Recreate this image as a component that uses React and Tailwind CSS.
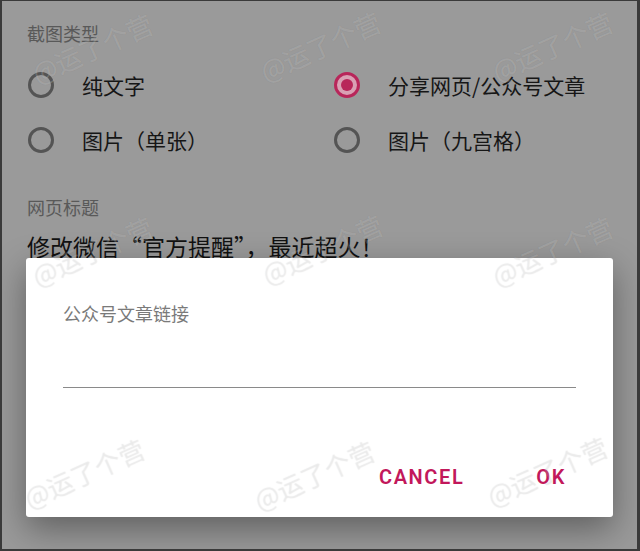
const cjk = "font-['Noto_Sans_CJK_SC','Noto_Sans',sans-serif]";

const Radio = ({ checked }) =>
  checked ? (
    <svg width="28" height="28" viewBox="0 0 28 28">
      <circle cx="14" cy="14" r="11.5" fill="#d9a0b4" stroke="#b8265a" strokeWidth="3" />
      <circle cx="14" cy="14" r="6" fill="#b8265a" />
    </svg>
  ) : (
    <svg width="28" height="28" viewBox="0 0 28 28">
      <circle cx="14" cy="14" r="11.5" fill="none" stroke="#545454" strokeWidth="3" />
    </svg>
  );

const Option = ({ label, checked }) => (
  <div className="flex items-center h-[28px]">
    <Radio checked={checked} />
    <span className="ml-[27px] text-[21px] text-[#161616] leading-[28px]">{label}</span>
  </div>
);

const marks = [
  [90, 47], [318, 45], [550, 45],
  [90, 250], [320, 248], [550, 250],
  [82, 472], [312, 474], [545, 470],
];

function App() {
  return (
    <div className={`relative w-[640px] h-[551px] overflow-hidden bg-[#9a9a9a] border-t border-l-2 border-r-[3px] border-b-2 border-[#3a3a3a] ${cjk}`}>
      {/* form behind the scrim */}
      <div className="pl-[25px] pt-[21px]">
        <div className="text-[18px] leading-[22px] text-[#595959]">截图类型</div>
        <div className="grid grid-cols-[306px_1fr] gap-y-[27px] mt-[27px]">
          <Option label="纯文字" />
          <Option label="分享网页/公众号文章" checked />
          <Option label="图片（单张）" />
          <Option label="图片（九宫格）" />
        </div>
        <div className="mt-[42px] text-[18px] leading-[22px] text-[#595959]">网页标题</div>
        <div className="mt-[13px] text-[23px] leading-[30px] text-[#111]">修改微信“官方提醒”，最近超火！</div>
      </div>

      {/* dialog */}
      <div className="absolute left-[24px] top-[257px] w-[587px] h-[259px] bg-white rounded-[3px] shadow-[0_12px_34px_rgba(0,0,0,0.38)] flex flex-col px-[37px] pt-[44px]">
        <div className="text-[18px] leading-[22px] text-[#7a7a7a]">公众号文章链接</div>
        <div className="h-[64px] border-b-[1.5px] border-[#8a8a8a]" />
        <div className="flex justify-end items-center gap-[72px] mt-[74px] pr-[10px] font-['Roboto',sans-serif] font-semibold text-[20px] tracking-[1.6px] text-[#c2185b]">
          <span>CANCEL</span>
          <span>OK</span>
        </div>
      </div>

      {/* watermarks */}
      {marks.map(([x, y], i) => (
        <div
          key={i}
          className="absolute pointer-events-none -translate-x-1/2 -translate-y-1/2 -rotate-[24deg] text-[26px] leading-none whitespace-nowrap text-white/20 [text-shadow:0_0_1px_rgba(0,0,0,0.1)]"
          style={{ left: x, top: y }}
        >
          @运了个营
        </div>
      ))}
    </div>
  );
}

export default App;
